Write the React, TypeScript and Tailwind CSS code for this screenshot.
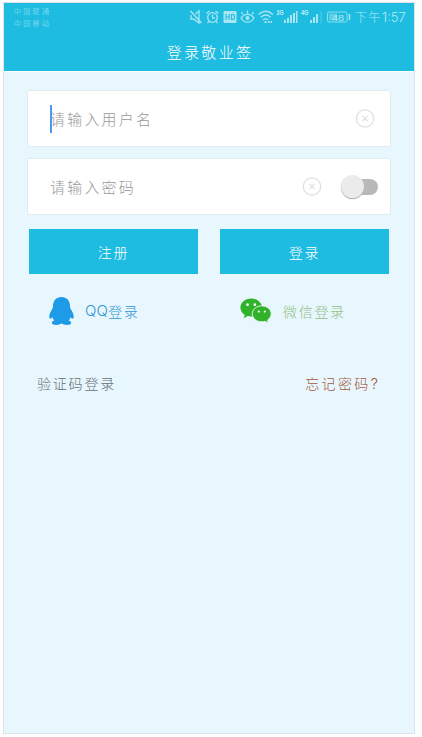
function StatusIcons() {
  return (
    <svg width="164" height="20" viewBox="0 0 164 20" fill="none" stroke="#a9e6f2" strokeWidth="1.3">
      {/* mute */}
      <path d="M1 8v4h2.500l5.500 4V4L5.500 7M0.500 4l11 12" />
      {/* alarm */}
      <circle cx="22.500" cy="10.500" r="4.800" />
      <path d="M22.500 7.500v3.500h2.500M16.500 6.500l3-2.500M28.500 6.500l-3-2.500M19 14.500L17.500 16M26 14.500L27.500 16" />
      {/* HD */}
      <rect x="33.500" y="4" width="13" height="12" rx="1" fill="#a9e6f2" stroke="none" />
      <path d="M36 7v6M39.200 7v6M36 10h3.200M41.600 7.500h1.200c1.500 0 1.800 1 1.800 2.500s-.3 2.500-1.800 2.500h-1.200z" stroke="#1fbce2" strokeWidth="1.100" />
      {/* eye */}
      <path d="M51 11c3.500-4.800 9.500-4.800 13 0c-3.500 5.600-9.500 5.600-13 0zM57.500 6.500V3.500M53 7.500L51.500 5.200M62 7.500L63.500 5.200" />
      <circle cx="57.500" cy="11" r="2" fill="#a9e6f2" stroke="none" />
      {/* wifi */}
      <path d="M68.500 7.500c4.500-4 10-4 14.500 0M70.700 10.200c3.300-2.800 6.800-2.800 10 0M73 12.900c2-1.500 3.500-1.500 5.200 0" />
      <path d="M74.500 15.200h2.200M78 15h1.500M80.500 15h1.500" strokeWidth="1.800" />
      {/* signals */}
      <g fill="#a9e6f2" stroke="none">
        <rect x="94" y="13" width="2" height="3" />
        <rect x="97" y="11" width="2" height="5" />
        <rect x="100" y="8" width="2" height="8" />
        <rect x="103" y="6" width="2" height="10" />
        <rect x="106" y="4" width="1.500" height="12" />
        <rect x="120" y="13" width="2" height="3" />
        <rect x="123" y="10" width="2" height="6" />
        <rect x="126" y="7" width="2" height="9" />
        <rect x="130.500" y="4" width="1" height="12" opacity=".4" />
      </g>
      <g fill="#c3eff7" stroke="none" fontFamily="Liberation Sans, sans-serif" fontWeight="bold" fontSize="7">
        <text x="86.500" y="8" textLength="7" lengthAdjust="spacingAndGlyphs">3G</text>
        <text x="111" y="8" textLength="7.500" lengthAdjust="spacingAndGlyphs">4G</text>
      </g>
      {/* battery */}
      <rect x="137.500" y="5" width="19.500" height="10" rx="1.500" strokeWidth="1" opacity=".8" />
      <rect x="139" y="6.500" width="8" height="7" fill="#a9e6f2" stroke="none" opacity=".45" />
      <path d="M159.500 7v6" strokeWidth="1.500" />
      <text x="142" y="13.500" fill="#b4eaf5" stroke="none" fontFamily="Liberation Sans, sans-serif" fontSize="9.500" textLength="12" lengthAdjust="spacingAndGlyphs">48</text>
    </svg>
  );
}

function ClearIcon() {
  return (
    <svg width="20" height="20" viewBox="0 0 20 20" fill="none" stroke="#dedede" strokeWidth="1.200">
      <circle cx="10" cy="9.500" r="8.700" />
      <path d="M7.300 6.800l5.400 5.400M12.700 6.800l-5.400 5.400" />
    </svg>
  );
}

function QQIcon() {
  return (
    <svg width="25" height="28" viewBox="0 0 25 28" fill="#1e9be6">
      <path d="M12.500 0C7.200 0 4.100 3.800 4 9c0 1.200-.2 2-.9 3.300C1.500 15 .3 17.300.3 19.500c0 1.500.4 2.200.9 2.200.7 0 1.600-.8 2.200-1.500.4 1.400 1.100 2.500 2.100 3.400-1.700.4-2.700 1.200-2.700 2.200C2.800 27.300 4.700 28 7.300 28c2.200 0 3.900-.5 5.200-1.400 1.300.9 3 1.400 5.200 1.400 2.600 0 4.500-.7 4.500-2.200 0-1-1-1.800-2.700-2.200 1-.9 1.700-2 2.100-3.400.6.700 1.500 1.500 2.200 1.500.5 0 .9-.7.9-2.200 0-2.200-1.200-4.500-2.800-7.200C21.200 11 21 10.200 21 9c-.1-5.200-3.200-9-8.500-9z" />
    </svg>
  );
}

function WechatIcon() {
  return (
    <svg width="32" height="26" viewBox="0 0 32 26">
      <path d="M11.200.5C5.200.5.400 4.500.400 9.600c0 3.100 1.700 5.700 4.400 7.400L3.500 20.200l4.300-2.100c1.100.3 2.200.5 3.400.5 6 0 10.800-4 10.800-9S17.200.5 11.200.5z" fill="#32b12a" />
      <path d="M21.800 7.900c-5.400 0-9.500 3.500-9.500 7.900s4.100 8 9.500 8c1.100 0 2.200-.2 3.200-.5l3.500 1.700-.9-3c2.200-1.400 3.600-3.600 3.600-6.200 0-4.400-4-7.900-9.400-7.900z" fill="#32b12a" stroke="#e8f7fd" strokeWidth=".9" />
      <g fill="#f3fbf5">
        <circle cx="7.500" cy="6.700" r="1.400" />
        <circle cx="14.800" cy="6.700" r="1.400" />
        <circle cx="18.800" cy="13.600" r="1.100" />
        <circle cx="24.800" cy="13.600" r="1.100" />
      </g>
    </svg>
  );
}

function App() {
  return (
    <div className="h-[737px] bg-white pl-[3px] pt-[2px] font-['Noto_Sans_CJK_SC',sans-serif] font-light">
      <div className="h-[732px] w-[412px] border border-[#dde5e8] bg-[#e8f7fd]">
        <header className="h-[69px] border-b border-white bg-[#1fbce2]">
          <div className="flex h-7 items-center">
            <div className="w-[186px] pl-[10px] text-[7px] leading-[12px] tracking-[2.3px] text-[#a5e3f0]">
              <p>中国联通</p>
              <p>中国移动</p>
            </div>
            <StatusIcons />
            <p className="ml-[1px] flex whitespace-nowrap pt-[2px] text-[12px] text-[#b5eaf5]">
              <span className="tracking-[1.5px]">下午</span>
              <span className="font-[Inter,sans-serif] text-[13px]">1:57</span>
            </p>
          </div>
          <h1 className="pl-[2px] pt-[10px] text-center text-[15px] leading-[22px] tracking-[2.300px] text-white">登录敬业签</h1>
        </header>

        <main className="px-[23px] pt-[18px] text-[14px]">
          <div className="flex h-[57px] items-center justify-between rounded-[2px] border border-[#e0edf0] bg-white pl-[22px] pr-[15px] text-[15px] tracking-[2.200px] text-[#999]">
            <div className="flex items-center">
              <span className="-mr-[2px] h-7 w-[2px] bg-[#4c97f0]" />
              <span className="pt-[2px]">请输入用户名</span>
            </div>
            <ClearIcon />
          </div>

          <div className="mt-[11px] flex h-[57px] items-center rounded-[2px] border border-[#e0edf0] bg-white pl-[22px] pr-[12px] text-[15px] tracking-[2.200px] text-[#999]">
            <span className="flex-1 pt-[2px]">请输入密码</span>
            <ClearIcon />
            <div className="ml-[19px] flex h-6 w-[37px] items-center">
              <span className="z-10 size-[23px] shrink-0 rounded-full bg-[#ebebeb] shadow-[0_1px_1px_#aaa]" />
              <span className="-ml-[12px] h-4 w-[26px] rounded-full bg-[#b9b9b9]" />
            </div>
          </div>

          <div className="mt-[14px] flex justify-between px-[2px] text-[14px] tracking-[1.800px] text-white">
            <button className="h-[45px] w-[169px] bg-[#1fbce2] pt-[2px]">注册</button>
            <button className="h-[45px] w-[169px] bg-[#1fbce2] pt-[2px]">登录</button>
          </div>

          <div className="mt-[22px] flex h-[30px] items-center pl-[22px] tracking-[1.700px]">
            <div className="flex w-[191px] items-center gap-[11px] text-[#3095d6]">
              <QQIcon />
              <span className="flex items-center">
                <span className="font-[Inter,sans-serif] text-[15px] tracking-[0.200px]">QQ</span>
                <span>登录</span>
              </span>
            </div>
            <div className="flex items-center gap-[11px] text-[#91bf83]">
              <WechatIcon />
              <span>微信登录</span>
            </div>
          </div>

          <div className="mt-[46px] flex justify-between pl-[10px] pr-[13px] text-[14px] leading-[22px] tracking-[1.800px]">
            <span className="text-[#666e71]">验证码登录</span>
            <span className="tracking-[2.300px] text-[#a5593c]">忘记密码<span className="font-[Inter,sans-serif] text-[15px] tracking-normal">?</span></span>
          </div>
        </main>
      </div>
    </div>
  );
}

export default App;
